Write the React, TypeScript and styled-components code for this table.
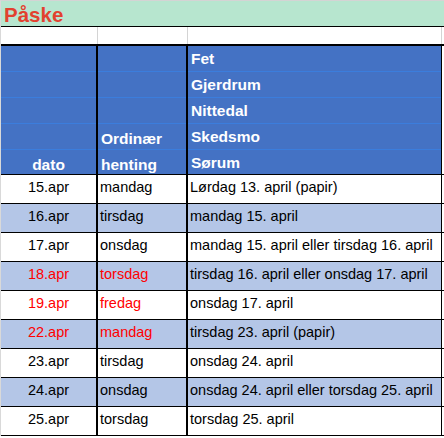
import React from 'react';
import styled, { createGlobalStyle } from 'styled-components';

const GlobalStyle = createGlobalStyle`
  body {
    margin: 0;
    background: #ffffff;
    font-family: "Liberation Sans", Arial, sans-serif;
  }
`;

type Row = { date: string; day: string; pickup: string; red?: boolean };

const rows: Row[] = [
  { date: '15.apr', day: 'mandag', pickup: 'Lørdag 13. april (papir)' },
  { date: '16.apr', day: 'tirsdag', pickup: 'mandag 15. april' },
  { date: '17.apr', day: 'onsdag', pickup: 'mandag 15. april eller tirsdag 16. april' },
  { date: '18.apr', day: 'torsdag', pickup: 'tirsdag 16. april eller onsdag 17. april', red: true },
  { date: '19.apr', day: 'fredag', pickup: 'onsdag 17. april', red: true },
  { date: '22.apr', day: 'mandag', pickup: 'tirsdag 23. april (papir)', red: true },
  { date: '23.apr', day: 'tirsdag', pickup: 'onsdag 24. april' },
  { date: '24.apr', day: 'onsdag', pickup: 'onsdag 24. april eller torsdag 25. april' },
  { date: '25.apr', day: 'torsdag', pickup: 'torsdag 25. april' },
];

const areas = ['Fet', 'Gjerdrum', 'Nittedal', 'Skedsmo', 'Sørum'];

const Sheet = styled.div`
  width: 443px;
  border-top: 1px solid #d4d4d4;
  border-left: 1px solid #d9d9d9;
  border-right: 1px solid #d4d4d4;
`;

const TitleBar = styled.div`
  height: 25px;
  padding: 0 0 0 3px;
  background: #b7e6cf;
  border-bottom: 1px solid #000;
  color: #e2412f;
  font-size: 20.5px;
  font-weight: bold;
  line-height: 27px;
`;

const Columns = styled.div`
  display: grid;
  grid-template-columns: 97px 90px 254px 2px;
`;

const SpacerRow = styled(Columns)`
  height: 17px;
  border-bottom: 2px solid #000;
`;

const SpacerCell = styled.div`
  border-right: 1px solid #d4d4d4;
`;

const Header = styled(Columns)`
  background: #4472c4;
  border-bottom: 1px solid #000;
`;

const HeaderColumn = styled.div<{ $last?: boolean }>`
  display: flex;
  flex-direction: column;
  border-right: ${(p) => (p.$last ? '1px' : '2px')} solid #000;
`;

const HeaderLine = styled.div<{ $align?: string; $top: number }>`
  height: ${(p) => 25 - p.$top}px;
  padding: ${(p) => p.$top}px 3px 0;
  border-bottom: 1px solid #3b7ddd;
  color: #ffffff;
  font-size: 15.5px;
  font-weight: bold;
  line-height: 18px;
  text-align: ${(p) => p.$align || 'left'};
  white-space: nowrap;

  &:last-child {
    height: ${(p) => 24 - p.$top}px;
    border-bottom: none;
  }
`;

const DataRow = styled(Columns)<{ $shade: boolean }>`
  height: 28px;
  border-bottom: 1px solid #000;
  background: ${(p) => (p.$shade ? '#b4c6e7' : '#ffffff')};
`;

const Cell = styled.div<{ $align?: string; $red?: boolean; $last?: boolean }>`
  padding: 3px 2px 0 2px;
  border-right: ${(p) => (p.$last ? '1px' : '2px')} solid #000;
  color: ${(p) => (p.$red ? '#ff0000' : '#000000')};
  font-size: 14.5px;
  line-height: 18px;
  text-align: ${(p) => p.$align || 'left'};
  white-space: nowrap;
  overflow: hidden;
`;

const Gap = styled.div`
  background: #ffffff;
`;

const App = () => {
  return (
    <>
      <GlobalStyle />
      <Sheet>
        <TitleBar>Påske</TitleBar>
        <SpacerRow>
          <SpacerCell />
          <SpacerCell />
          <SpacerCell />
          <Gap />
        </SpacerRow>
        <Header>
          <HeaderColumn>
            {areas.map((_, i) => (
              <HeaderLine key={i} $align="center" $top={6}>
                {i === 4 ? 'dato' : ''}
              </HeaderLine>
            ))}
          </HeaderColumn>
          <HeaderColumn>
            {areas.map((_, i) => (
              <HeaderLine key={i} $top={6}>
                {i === 3 ? 'Ordinær' : i === 4 ? 'henting' : ''}
              </HeaderLine>
            ))}
          </HeaderColumn>
          <HeaderColumn $last>
            {areas.map((a) => (
              <HeaderLine key={a} $top={4}>
                {a}
              </HeaderLine>
            ))}
          </HeaderColumn>
          <Gap />
        </Header>
        {rows.map((r, i) => (
          <DataRow key={r.date} $shade={i % 2 === 1}>
            <Cell $align="center" $red={r.red}>
              {r.date}
            </Cell>
            <Cell $red={r.red}>{r.day}</Cell>
            <Cell $last>{r.pickup}</Cell>
            <Gap />
          </DataRow>
        ))}
      </Sheet>
    </>
  );
};

export default App;
